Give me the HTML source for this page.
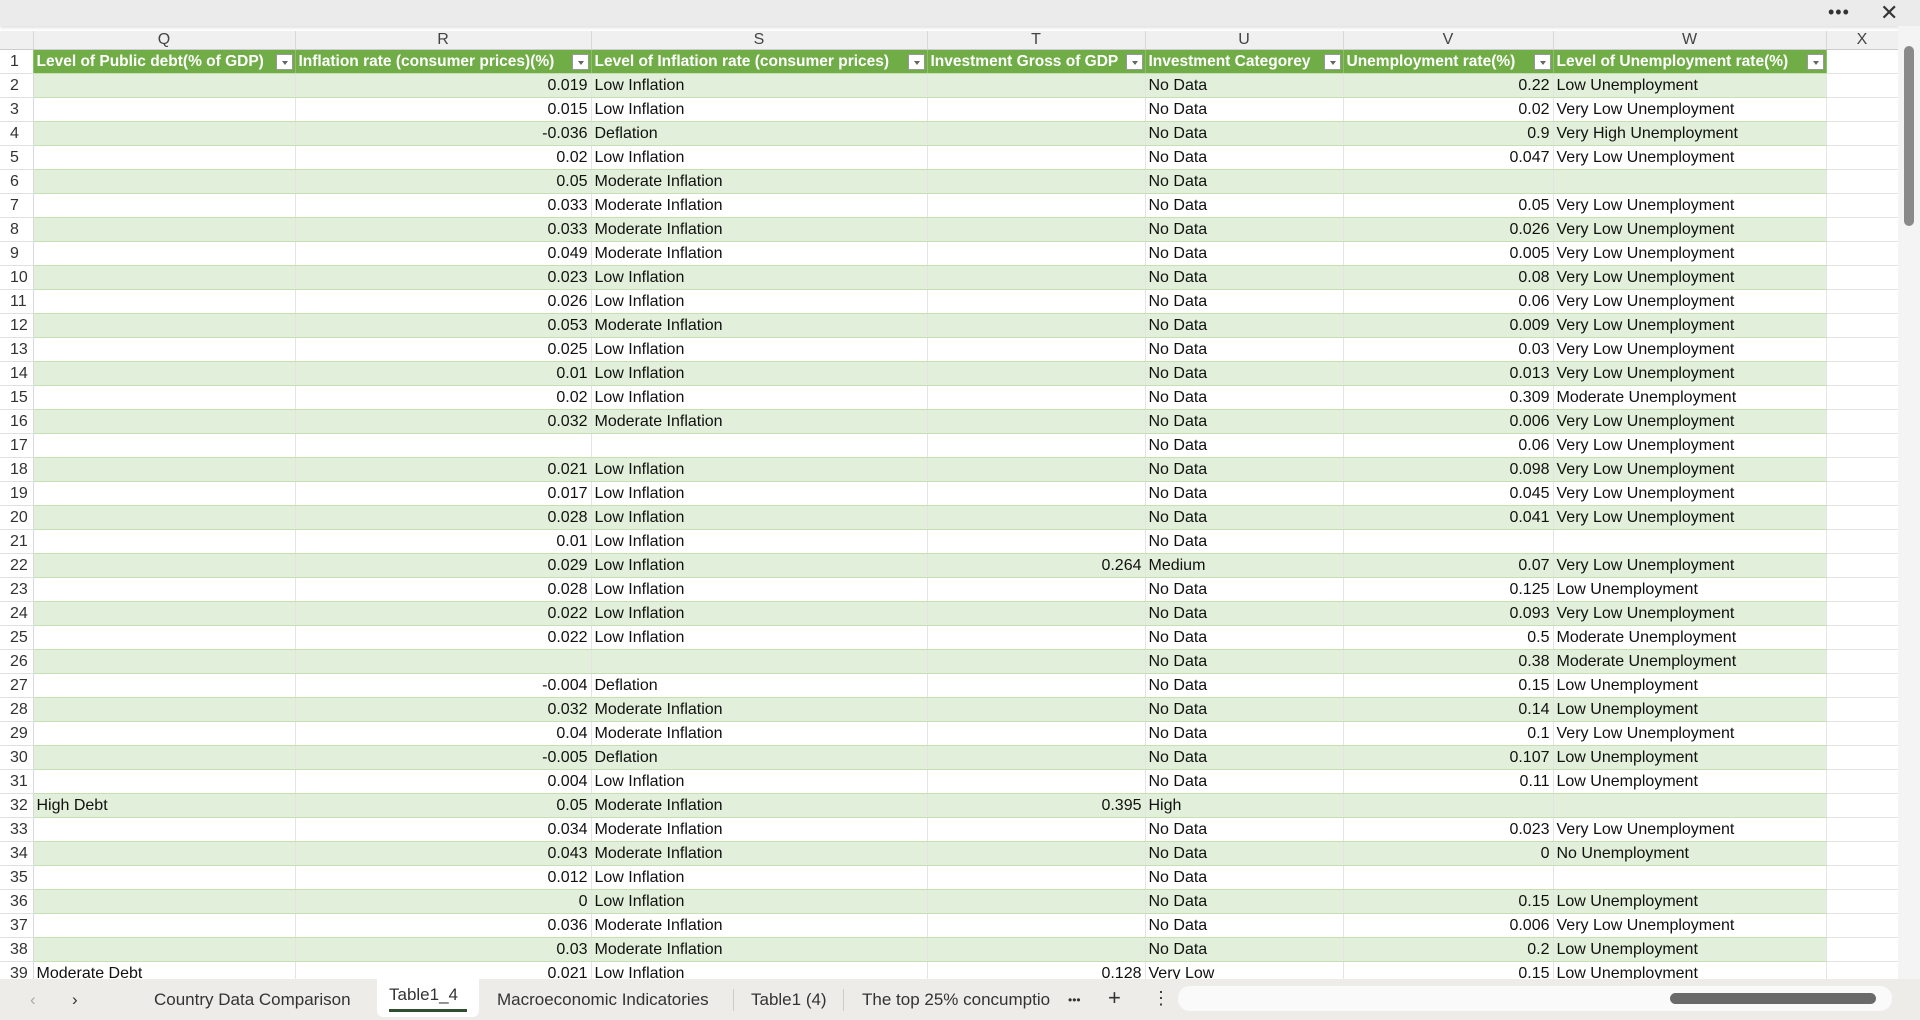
<!DOCTYPE html>
<html><head><meta charset="utf-8"><style>
*{margin:0;padding:0;box-sizing:border-box}
body{width:1920px;height:1020px;overflow:hidden;background:#fff;font-family:"Liberation Sans",sans-serif;position:relative}
#top{position:absolute;left:0;top:0;width:1920px;height:26px;background:#ebebeb;box-shadow:0 2px 3px rgba(0,0,0,.12)}
#top .d{position:absolute;left:1828px;top:2px;font-size:18px;letter-spacing:1px;color:#333}
#top .x{position:absolute;left:1880px;top:0px;font-size:22px;color:#333}
table{position:absolute;left:0;top:31px;border-collapse:collapse;table-layout:fixed}
td{height:24px;font-size:16px;color:#111;white-space:nowrap;overflow:hidden;padding:0 3px;border-bottom:1px solid #c6e0b4;border-right:1px solid #e4e4e4;line-height:23px}
tr.h td{height:18px;background:#f0f0f0;color:#444;text-align:center;font-size:16px;line-height:17px;border-right:1px solid #d8d8d8;border-bottom:1px solid #ccc}
tr.g td{background:#70ad47;color:#fff;font-weight:bold;font-size:15.5px;border-right:1px solid #8cc168;position:relative}
tr.g td i{position:absolute;right:2px;top:4px;width:17px;height:16px;background:#fff;border:1px solid #999}
tr.g td i:after{content:"";position:absolute;left:5px;top:6px;border:3px solid transparent;border-top:4px solid #666}
tr:nth-child(odd):not(.h):not(.g) td{background:#e2efda}
td.n{background:#fff!important;text-align:left;color:#333;border-right:1px solid #d8d8d8;border-bottom:1px solid #e0e0e0;padding-left:10px}
td.r{text-align:right}
td.e{background:#fff!important;border-bottom:1px solid #e4e4e4}
#sb{position:absolute;left:1898px;top:26px;width:22px;height:953px;background:#f4f4f4}
#sb .t{position:absolute;left:6px;top:20px;width:10px;height:180px;background:#8a8a8a;border-radius:5px}
#tabs{position:absolute;left:0;top:979px;width:1920px;height:41px;background:#edece9;font-size:17px;color:#333}
#tabs span{position:absolute;top:11px}
#act{position:absolute;left:377px;top:0;width:102px;height:38px;background:#fff;border-radius:0 0 6px 6px}
#act b{font-weight:normal;position:absolute;left:12px;top:6px;font-size:17px}
#act u{position:absolute;left:12px;top:30px;width:78px;height:3px;background:#2f4f2f}
.sep{position:absolute;top:10px;width:1px;height:22px;background:#ccc}
#hs{position:absolute;left:1178px;top:7px;width:714px;height:25px;background:#fafafa;border-radius:12px}
#hs .t{position:absolute;left:492px;top:7px;width:206px;height:11px;background:#6a6a6a;border-radius:6px}
</style></head><body>
<div id="top"><span class="d">•••</span><span class="x">✕</span></div>
<table>
<colgroup><col style="width:33px"><col style="width:262px"><col style="width:296px"><col style="width:336px"><col style="width:218px"><col style="width:198px"><col style="width:210px"><col style="width:273px"><col style="width:72px"></colgroup>
<tr class="h"><td></td><td>Q</td><td>R</td><td>S</td><td>T</td><td>U</td><td>V</td><td>W</td><td>X</td></tr>
<tr class="g"><td class="n" style="color:#333;font-weight:normal;font-size:16px">1</td><td>Level of Public debt(% of GDP)<i></i></td><td>Inflation rate (consumer prices)(%)<i></i></td><td>Level of Inflation rate (consumer prices)<i></i></td><td>Investment Gross of GDP<i></i></td><td>Investment Categorey<i></i></td><td>Unemployment rate(%)<i></i></td><td>Level of Unemployment rate(%)<i></i></td><td class="e"></td></tr>
<tr><td class="n">2</td><td></td><td class="r">0.019</td><td>Low Inflation</td><td></td><td>No Data</td><td class="r">0.22</td><td>Low Unemployment</td><td class="e"></td></tr>
<tr><td class="n">3</td><td></td><td class="r">0.015</td><td>Low Inflation</td><td></td><td>No Data</td><td class="r">0.02</td><td>Very Low Unemployment</td><td class="e"></td></tr>
<tr><td class="n">4</td><td></td><td class="r">-0.036</td><td>Deflation</td><td></td><td>No Data</td><td class="r">0.9</td><td>Very High Unemployment</td><td class="e"></td></tr>
<tr><td class="n">5</td><td></td><td class="r">0.02</td><td>Low Inflation</td><td></td><td>No Data</td><td class="r">0.047</td><td>Very Low Unemployment</td><td class="e"></td></tr>
<tr><td class="n">6</td><td></td><td class="r">0.05</td><td>Moderate Inflation</td><td></td><td>No Data</td><td class="r"></td><td></td><td class="e"></td></tr>
<tr><td class="n">7</td><td></td><td class="r">0.033</td><td>Moderate Inflation</td><td></td><td>No Data</td><td class="r">0.05</td><td>Very Low Unemployment</td><td class="e"></td></tr>
<tr><td class="n">8</td><td></td><td class="r">0.033</td><td>Moderate Inflation</td><td></td><td>No Data</td><td class="r">0.026</td><td>Very Low Unemployment</td><td class="e"></td></tr>
<tr><td class="n">9</td><td></td><td class="r">0.049</td><td>Moderate Inflation</td><td></td><td>No Data</td><td class="r">0.005</td><td>Very Low Unemployment</td><td class="e"></td></tr>
<tr><td class="n">10</td><td></td><td class="r">0.023</td><td>Low Inflation</td><td></td><td>No Data</td><td class="r">0.08</td><td>Very Low Unemployment</td><td class="e"></td></tr>
<tr><td class="n">11</td><td></td><td class="r">0.026</td><td>Low Inflation</td><td></td><td>No Data</td><td class="r">0.06</td><td>Very Low Unemployment</td><td class="e"></td></tr>
<tr><td class="n">12</td><td></td><td class="r">0.053</td><td>Moderate Inflation</td><td></td><td>No Data</td><td class="r">0.009</td><td>Very Low Unemployment</td><td class="e"></td></tr>
<tr><td class="n">13</td><td></td><td class="r">0.025</td><td>Low Inflation</td><td></td><td>No Data</td><td class="r">0.03</td><td>Very Low Unemployment</td><td class="e"></td></tr>
<tr><td class="n">14</td><td></td><td class="r">0.01</td><td>Low Inflation</td><td></td><td>No Data</td><td class="r">0.013</td><td>Very Low Unemployment</td><td class="e"></td></tr>
<tr><td class="n">15</td><td></td><td class="r">0.02</td><td>Low Inflation</td><td></td><td>No Data</td><td class="r">0.309</td><td>Moderate Unemployment</td><td class="e"></td></tr>
<tr><td class="n">16</td><td></td><td class="r">0.032</td><td>Moderate Inflation</td><td></td><td>No Data</td><td class="r">0.006</td><td>Very Low Unemployment</td><td class="e"></td></tr>
<tr><td class="n">17</td><td></td><td class="r"></td><td></td><td></td><td>No Data</td><td class="r">0.06</td><td>Very Low Unemployment</td><td class="e"></td></tr>
<tr><td class="n">18</td><td></td><td class="r">0.021</td><td>Low Inflation</td><td></td><td>No Data</td><td class="r">0.098</td><td>Very Low Unemployment</td><td class="e"></td></tr>
<tr><td class="n">19</td><td></td><td class="r">0.017</td><td>Low Inflation</td><td></td><td>No Data</td><td class="r">0.045</td><td>Very Low Unemployment</td><td class="e"></td></tr>
<tr><td class="n">20</td><td></td><td class="r">0.028</td><td>Low Inflation</td><td></td><td>No Data</td><td class="r">0.041</td><td>Very Low Unemployment</td><td class="e"></td></tr>
<tr><td class="n">21</td><td></td><td class="r">0.01</td><td>Low Inflation</td><td></td><td>No Data</td><td class="r"></td><td></td><td class="e"></td></tr>
<tr><td class="n">22</td><td></td><td class="r">0.029</td><td>Low Inflation</td><td class="r">0.264</td><td>Medium</td><td class="r">0.07</td><td>Very Low Unemployment</td><td class="e"></td></tr>
<tr><td class="n">23</td><td></td><td class="r">0.028</td><td>Low Inflation</td><td></td><td>No Data</td><td class="r">0.125</td><td>Low Unemployment</td><td class="e"></td></tr>
<tr><td class="n">24</td><td></td><td class="r">0.022</td><td>Low Inflation</td><td></td><td>No Data</td><td class="r">0.093</td><td>Very Low Unemployment</td><td class="e"></td></tr>
<tr><td class="n">25</td><td></td><td class="r">0.022</td><td>Low Inflation</td><td></td><td>No Data</td><td class="r">0.5</td><td>Moderate Unemployment</td><td class="e"></td></tr>
<tr><td class="n">26</td><td></td><td class="r"></td><td></td><td></td><td>No Data</td><td class="r">0.38</td><td>Moderate Unemployment</td><td class="e"></td></tr>
<tr><td class="n">27</td><td></td><td class="r">-0.004</td><td>Deflation</td><td></td><td>No Data</td><td class="r">0.15</td><td>Low Unemployment</td><td class="e"></td></tr>
<tr><td class="n">28</td><td></td><td class="r">0.032</td><td>Moderate Inflation</td><td></td><td>No Data</td><td class="r">0.14</td><td>Low Unemployment</td><td class="e"></td></tr>
<tr><td class="n">29</td><td></td><td class="r">0.04</td><td>Moderate Inflation</td><td></td><td>No Data</td><td class="r">0.1</td><td>Very Low Unemployment</td><td class="e"></td></tr>
<tr><td class="n">30</td><td></td><td class="r">-0.005</td><td>Deflation</td><td></td><td>No Data</td><td class="r">0.107</td><td>Low Unemployment</td><td class="e"></td></tr>
<tr><td class="n">31</td><td></td><td class="r">0.004</td><td>Low Inflation</td><td></td><td>No Data</td><td class="r">0.11</td><td>Low Unemployment</td><td class="e"></td></tr>
<tr><td class="n">32</td><td>High Debt</td><td class="r">0.05</td><td>Moderate Inflation</td><td class="r">0.395</td><td>High</td><td class="r"></td><td></td><td class="e"></td></tr>
<tr><td class="n">33</td><td></td><td class="r">0.034</td><td>Moderate Inflation</td><td></td><td>No Data</td><td class="r">0.023</td><td>Very Low Unemployment</td><td class="e"></td></tr>
<tr><td class="n">34</td><td></td><td class="r">0.043</td><td>Moderate Inflation</td><td></td><td>No Data</td><td class="r">0</td><td>No Unemployment</td><td class="e"></td></tr>
<tr><td class="n">35</td><td></td><td class="r">0.012</td><td>Low Inflation</td><td></td><td>No Data</td><td class="r"></td><td></td><td class="e"></td></tr>
<tr><td class="n">36</td><td></td><td class="r">0</td><td>Low Inflation</td><td></td><td>No Data</td><td class="r">0.15</td><td>Low Unemployment</td><td class="e"></td></tr>
<tr><td class="n">37</td><td></td><td class="r">0.036</td><td>Moderate Inflation</td><td></td><td>No Data</td><td class="r">0.006</td><td>Very Low Unemployment</td><td class="e"></td></tr>
<tr><td class="n">38</td><td></td><td class="r">0.03</td><td>Moderate Inflation</td><td></td><td>No Data</td><td class="r">0.2</td><td>Low Unemployment</td><td class="e"></td></tr>
<tr><td class="n">39</td><td>Moderate Debt</td><td class="r">0.021</td><td>Low Inflation</td><td class="r">0.128</td><td>Very Low</td><td class="r">0.15</td><td>Low Unemployment</td><td class="e"></td></tr>
</table>
<div id="sb"><div class="t"></div></div>
<div id="tabs">
<span style="left:30px;color:#aaa">&#8249;</span><span style="left:72px">&#8250;</span>
<span style="left:154px">Country Data Comparison</span>
<div id="act"><b>Table1_4</b><u></u></div>
<span style="left:497px">Macroeconomic Indicatories</span><div class="sep" style="left:733px"></div>
<span style="left:751px">Table1 (4)</span><div class="sep" style="left:843px"></div>
<span style="left:862px">The top 25% concumptio</span>
<span style="left:1068px;font-size:12px;top:14px">•••</span>
<span style="left:1108px;font-size:22px;top:6px">+</span>
<span style="left:1152px;font-size:18px;top:9px">⋮</span>
<div id="hs"><div class="t"></div></div>
</div>
</body></html>
